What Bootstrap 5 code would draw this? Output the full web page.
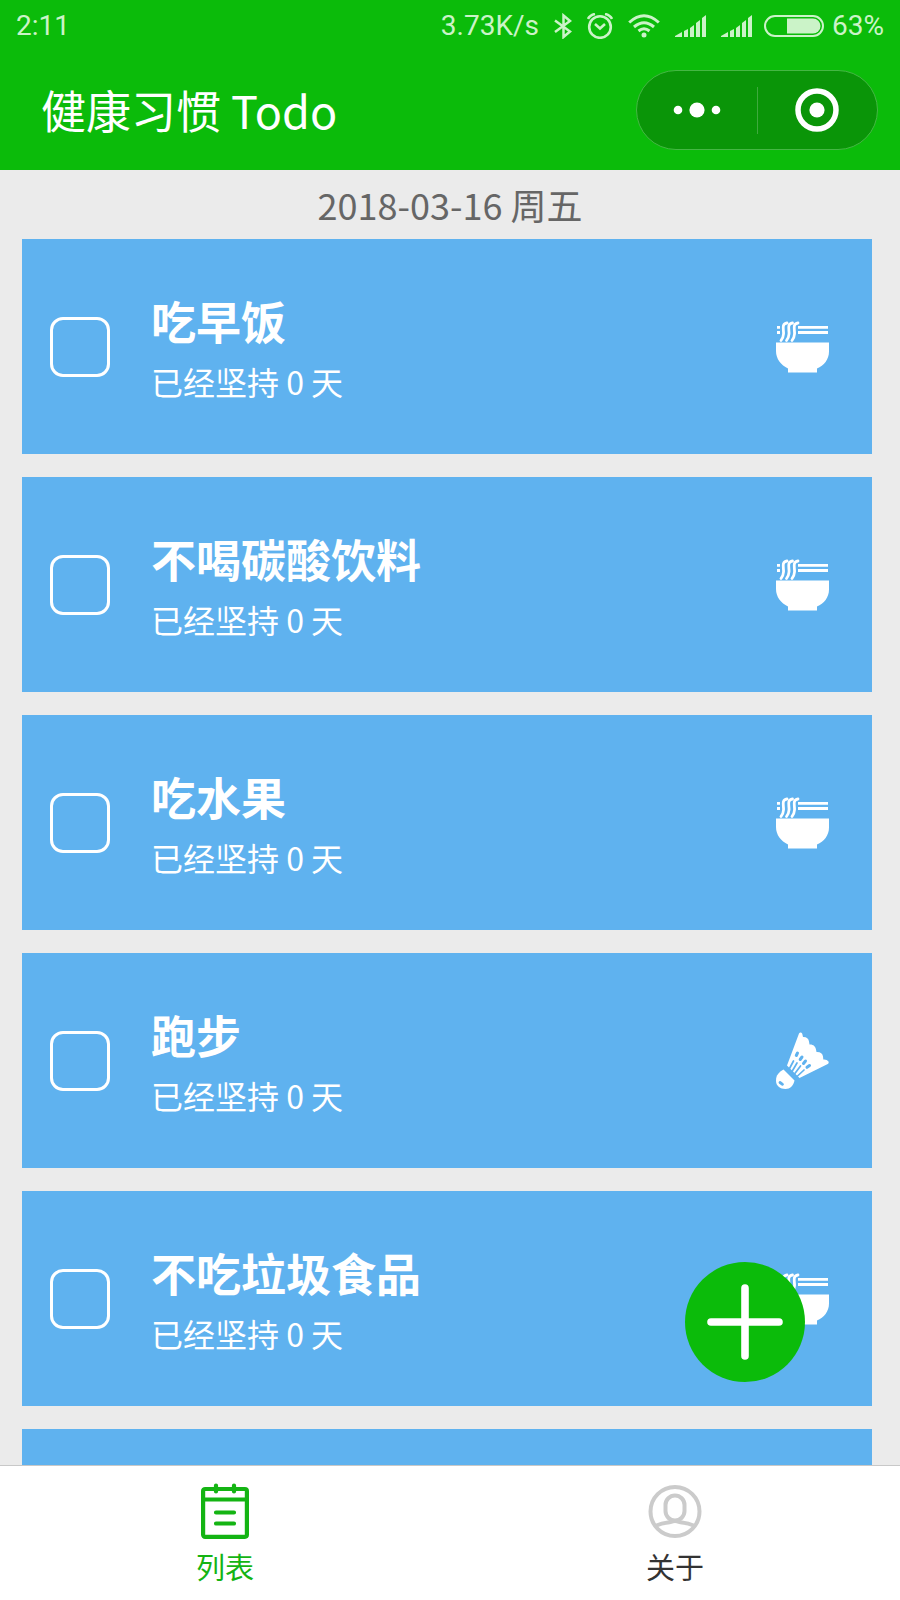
<!DOCTYPE html>
<html lang="zh-CN">
<head>
<meta charset="utf-8">
<meta name="viewport" content="width=device-width, initial-scale=1">
<title>健康习惯 Todo</title>
<link href="https://cdn.jsdelivr.net/npm/bootstrap@5.3.0/dist/css/bootstrap.min.css" rel="stylesheet">
<style>
  :root { --brand: #0bbb0a; --sky: #5fb2ef; }
  body { font-family: "Noto Sans CJK SC", sans-serif; background: #ebebeb; }
  svg { display: block; flex: none; }
  main { min-height: 0; }
  .app-header { background: var(--brand); }
  .status-bar { font: 28px/52px Roboto, sans-serif; color: #cbf3c8; padding: 0 16px; }
  .status-icons { gap: 15px; }
  .battery-group { gap: 12px; }
  .title-bar { height: 118px; padding: 0 22px 2px 41px; }
  .app-title { font-size: 45px; line-height: 60px; font-weight: 400; }
  .capsule { width: 242px; height: 80px; border: 1px solid #45b744; border-radius: 40px; background: #0a9508; }
  .capsule button { flex: 1 1 0; height: 100%; }
  .capsule-line { width: 1px; height: 47px; background: #3faa3e; }
  .bare { border: 0; padding: 0; background: none; display: flex; align-items: center; justify-content: center; }
  .day { font-size: 36px; line-height: 69px; color: #666; }
  .habits { gap: 23px; padding: 0 28px 0 22px; }
  .habit { height: 215px; background: var(--sky); padding: 0 43px 0 28px; gap: 41px; }
  .habit label { padding-top: 5px; }
  .tick { appearance: none; flex: none; width: 60px; height: 60px; margin: 0; border: 3px solid #fff; border-radius: 13px; background: transparent; }
  .tick:checked { background: #fff; }
  .habit-name { font-size: 45px; line-height: 64px; font-weight: 700; }
  .habit-days { font-size: 32px; line-height: 56px; }
  .fab { width: 120px; height: 120px; right: 95px; bottom: 83px; border-radius: 50%; background: var(--brand); }
  .tabs { height: 135px; border-top: 1px solid #c8c8c8; }
  .tabs a { flex: 1 1 0; padding-top: 17px; font-size: 29px; line-height: 40px; color: #333; text-decoration: none; gap: 7px; }
  .tabs a.current { color: #14b413; }
</style>
</head>
<body>
<svg width="0" height="0" class="position-absolute" aria-hidden="true">
  <symbol id="noodles" viewBox="0 0 53 52">
    <path fill="#fff" d="M0 21.500h53v9c0 8-5 14-12 17v4H12v-4C5 44 0 38 0 30zM22 5h30v2.700H22zM22 10h30v3H22zM1 5h3v2.700H1zM1 10h3v3H1z"/>
    <path fill="none" stroke="#fff" stroke-width="2.800" stroke-linecap="round" d="M11 2c-6 1-3 7-3.500 11-.2 3-1 5-2.500 6.500M16.500 2c-6 1-3 7-3.500 11-.2 3-1 5-2.500 6.500M22 2c-6 1-3 7-3.500 11-.2 3-1 5-2.500 6.500"/>
  </symbol>
  <symbol id="shuttle" viewBox="0 0 53 58">
    <path fill="#fff" d="M23 1.500c1-1.500 2.800-1 3.300.5l.7 3c3.500-.2 5.500 1.500 6 4.500l.5 3c4-.2 6 2 6.500 5l.5 2.500c4-.2 6 1.500 6.500 4.500l.3 3c2.500-.2 4 .5 5.200 2 .5 1.500 0 2.200-1.200 2.700L23.500 46 11 33.500z"/>
    <path fill="#fff" d="M7.500 37.500 18.500 48.500c-1 5-4.500 8.500-9 8.500C4 57 0 54 0 48.500 0 43 3 40 7.500 37.500z"/>
    <g stroke="#5fb2ef" stroke-linecap="round" fill="none">
      <path stroke-width="3" d="M21.500 21l-1.200 2.500M26 25l-1.800 2.500M29.500 29l-2 2.500M33.500 33.500l-2.500 1.800"/>
      <path stroke-width="1.700" d="M17.500 29l-4 7.500M21 31l-5 8.500M24.500 34l-6 8M28 38l-7 6.500"/>
      <path stroke-width="2.800" d="M4 50.500l2.500 1.800"/>
    </g>
  </symbol>
  <symbol id="signal" viewBox="0 0 31 22">
    <path fill="#cbf3c8" d="M0 22v-1l7-4v5zM9 22v-6l4-2v8zM15 22v-9l4-3v12zM21 22V8l4-3v17zM27 22V3l4-3v22z"/>
  </symbol>
</svg>

<div class="vh-100 d-flex flex-column overflow-hidden">
  <header class="app-header text-white">
    <div class="status-bar d-flex justify-content-between">
      <span>2:11</span>
      <div class="status-icons d-flex align-items-center">
        <span>3.73K/s</span>
        <svg width="18" height="26" viewBox="0 0 18 26" fill="none" stroke="#cbf3c8" stroke-width="2.500"><path d="M1 7.500l15 11-6.500 5.500V2.500L16 8 1 19"/></svg>
        <svg width="26" height="26" viewBox="0 0 26 26" fill="none" stroke="#cbf3c8" stroke-width="2.600"><circle cx="13" cy="14" r="10.800"/><path d="M8 11l5 4.500 5-4.500M1 6q2-4 7-5M25 6q-2-4-7-5"/></svg>
        <svg width="32" height="24" viewBox="0 0 32 24" fill="none" stroke="#cbf3c8" stroke-width="3"><path d="M1.200 8.500Q16-5 30.800 8.500M6 13q10-8.500 20 0M10.500 17q5.500-4.500 11 0"/><circle cx="16" cy="21" r="2.500" fill="#cbf3c8" stroke="none"/></svg>
        <svg width="31" height="22"><use href="#signal"/></svg>
        <div class="battery-group d-flex align-items-center">
          <svg width="31" height="22"><use href="#signal"/></svg>
          <div class="d-flex align-items-center gap-2">
            <svg width="60" height="22" viewBox="0 0 60 22"><rect x="1" y="1" width="58" height="20" rx="10" fill="none" stroke="#cbf3c8" stroke-width="2"/><path fill="#cbf3c8" d="M23 3.500h26a7.500 7.500 0 0 1 0 15H23z"/></svg>
            <span>63%</span>
          </div>
        </div>
      </div>
    </div>
    <div class="title-bar d-flex align-items-center justify-content-between">
      <h1 class="app-title m-0">健康习惯 Todo</h1>
      <div class="capsule d-flex align-items-center">
        <button type="button" class="bare" aria-label="更多"><svg width="48" height="16" viewBox="0 0 48 16" fill="#fff"><circle cx="5" cy="8" r="4.300"/><circle cx="24" cy="8" r="7.600"/><circle cx="43" cy="8" r="4.300"/></svg></button>
        <span class="capsule-line"></span>
        <button type="button" class="bare" aria-label="关闭"><svg width="44" height="44" viewBox="0 0 44 44"><circle cx="22" cy="22" r="19" fill="none" stroke="#fff" stroke-width="5.500"/><circle cx="22" cy="22" r="7.600" fill="#fff"/></svg></button>
      </div>
    </div>
  </header>

  <main class="flex-fill position-relative overflow-hidden">
    <div class="h-100 overflow-hidden">
      <div class="day text-center">2018-03-16 周五</div>
      <ul class="habits list-unstyled d-flex flex-column m-0 text-white">
        <li class="habit d-flex align-items-center flex-shrink-0">
          <input class="tick" type="checkbox" id="h1">
          <label for="h1" class="flex-fill"><span class="habit-name d-block">吃早饭</span><span class="habit-days d-block">已经坚持 0 天</span></label>
          <svg width="53" height="52"><use href="#noodles"/></svg>
        </li>
        <li class="habit d-flex align-items-center flex-shrink-0">
          <input class="tick" type="checkbox" id="h2">
          <label for="h2" class="flex-fill"><span class="habit-name d-block">不喝碳酸饮料</span><span class="habit-days d-block">已经坚持 0 天</span></label>
          <svg width="53" height="52"><use href="#noodles"/></svg>
        </li>
        <li class="habit d-flex align-items-center flex-shrink-0">
          <input class="tick" type="checkbox" id="h3">
          <label for="h3" class="flex-fill"><span class="habit-name d-block">吃水果</span><span class="habit-days d-block">已经坚持 0 天</span></label>
          <svg width="53" height="52"><use href="#noodles"/></svg>
        </li>
        <li class="habit d-flex align-items-center flex-shrink-0">
          <input class="tick" type="checkbox" id="h4">
          <label for="h4" class="flex-fill"><span class="habit-name d-block">跑步</span><span class="habit-days d-block">已经坚持 0 天</span></label>
          <svg width="53" height="58"><use href="#shuttle"/></svg>
        </li>
        <li class="habit d-flex align-items-center flex-shrink-0">
          <input class="tick" type="checkbox" id="h5">
          <label for="h5" class="flex-fill"><span class="habit-name d-block">不吃垃圾食品</span><span class="habit-days d-block">已经坚持 0 天</span></label>
          <svg width="53" height="52"><use href="#noodles"/></svg>
        </li>
        <li class="habit flex-shrink-0"></li>
      </ul>
    </div>
    <button type="button" class="fab bare position-absolute" aria-label="添加">
      <svg width="76" height="76" viewBox="0 0 76 76" stroke="#fff" stroke-width="7.600" stroke-linecap="round"><path d="M38 4v68M4 38h68"/></svg>
    </button>
  </main>

  <nav class="tabs d-flex bg-white flex-shrink-0">
    <a href="#list" class="current d-flex flex-column align-items-center" aria-current="page">
      <svg width="48" height="56" viewBox="0 0 48 56" fill="none" stroke="#14b413" stroke-width="4.200" stroke-linecap="round" stroke-linejoin="round"><rect x="2.100" y="6" width="43.800" height="47.800" rx="2"/><path d="M2 16.500h44M15 2.500v6M33 2.500v6M15 29.500h18M15 40.500h18"/></svg>
      列表
    </a>
    <a href="#about" class="d-flex flex-column align-items-center">
      <svg width="54" height="56" viewBox="0 0 54 56" fill="none" stroke="#cbcbcb" stroke-width="4"><circle cx="27" cy="28.500" r="24.500"/><rect x="17.500" y="12.500" width="19" height="25" rx="9.500"/><path d="M7 43q7-3 13-3.500c3-.2 3.500-1.500 7-1.500s4 1.300 7 1.500Q40 40 47 43"/></svg>
      关于
    </a>
  </nav>
</div>
<script src="https://cdn.jsdelivr.net/npm/bootstrap@5.3.0/dist/js/bootstrap.bundle.min.js"></script>
</body>
</html>
